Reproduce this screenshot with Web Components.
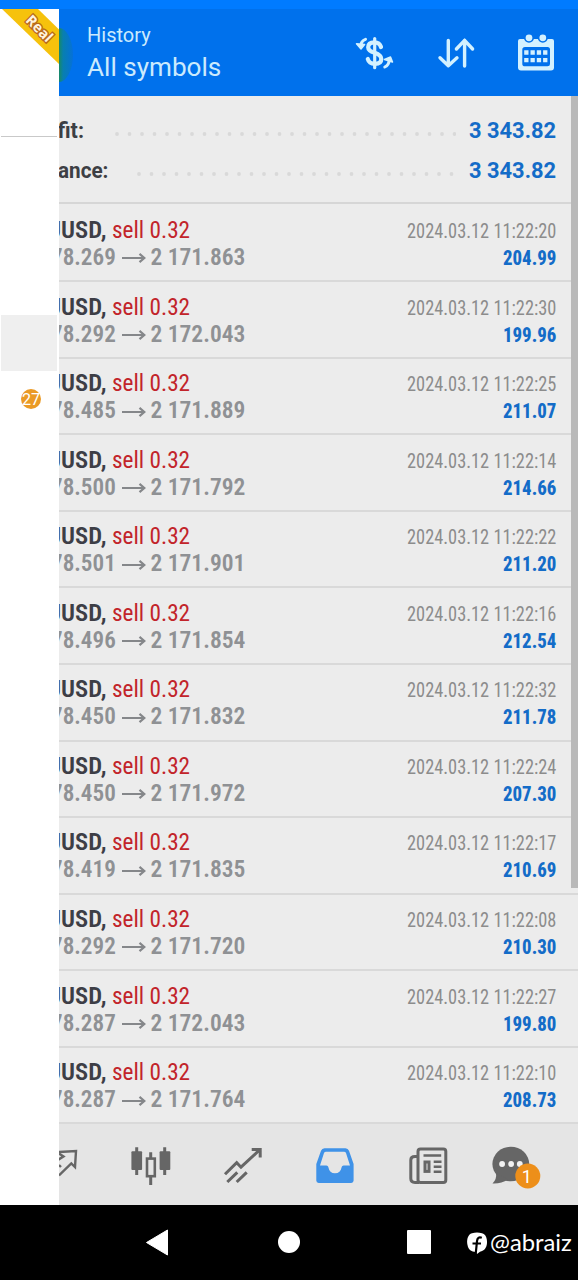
<!DOCTYPE html>
<html lang="en">
<head>
<meta charset="utf-8">
<title>History</title>
<style>
    html, body {
        margin: 0;
        background: #000;
        font-family: "Roboto Condensed", Roboto, "Liberation Sans", sans-serif;
    }
    body {
        width: 578px;
        height: 1280px;
        overflow: hidden;
    }
</style>
</head>
<body>
<history-app></history-app>
<script>
// Text squeezed or stretched to a fixed width
class FitText extends HTMLElement {
    constructor() {
        super();
        this.attachShadow({ mode: 'open' });
    }

    connectedCallback() {
        const width = Number(this.getAttribute('width'));
        this.shadowRoot.innerHTML = `
            <style>
                :host {
                    display: block;
                    flex: none;
                    width: ${width}px;
                    white-space: nowrap;
                }
                span {
                    display: inline-block;
                    transform-origin: 0 50%;
                }
            </style>
            <span><slot></slot></span>
        `;
        const span = this.shadowRoot.querySelector('span');
        span.style.transform = `scaleX(${width / span.offsetWidth})`;
    }
}

class SideDrawer extends HTMLElement {
    constructor() {
        super();
        this.attachShadow({ mode: 'open' });
        this.shadowRoot.innerHTML = `
            <style>
                :host {
                    display: flex;
                    flex-direction: column;
                    background: #fff;
                    overflow: hidden;
                }
                svg { display: block; flex: none; }
                .line { height: 1px; margin: 67px 2px 0 1px; background: #c9c9c9; flex: none; }
                .active { height: 56px; margin: 178px 2px 0 1px; background: #efefef; flex: none; }
                .badge {
                    width: 20px;
                    height: 20px;
                    margin: 18px 0 0 20.5px;
                    border-radius: 50%;
                    background: #eb9a25;
                    color: #fff;
                    font: 17px/20px Roboto, sans-serif;
                    display: flex;
                    justify-content: center;
                }
            </style>
            <svg width="59" height="60" viewBox="0 0 59 60">
                <path d="M2 0H38L59 20.5V55Z" fill="#f6c20c"/>
                <text x="39" y="24.5" transform="rotate(45 39 20)" text-anchor="middle" font-family="Open Sans, sans-serif"
                    font-size="14.5" font-weight="700" fill="#fff3dd" stroke="#b9681c" stroke-width="2.6" paint-order="stroke">Real</text>
            </svg>
            <div class="line"></div>
            <div class="active"></div>
            <div class="badge"><fit-text width="18">27</fit-text></div>
        `;
    }
}

class AppHeader extends HTMLElement {
    constructor() {
        super();
        this.attachShadow({ mode: 'open' });
        this.shadowRoot.innerHTML = `
            <style>
                :host {
                    display: flex;
                    align-items: center;
                    height: 87px;
                    box-sizing: border-box;
                    padding-right: 18px;
                    background: #0071ec;
                    color: #cbeafd;
                    font-family: Roboto, sans-serif;
                }
                .avatar {
                    width: 14px;
                    height: 54px;
                    margin: 4px 14px 0 0;
                    border-radius: 0 14px 14px 0 / 0 27px 27px 0;
                    background: linear-gradient(90deg, #178a66, #087fb0 30%, #0571d8);
                }
                .titles { flex: 1; padding-top: 6px; }
                .small { font-size: 20px; line-height: 26px; margin-top: -3px; }
                .big { font-size: 26.5px; line-height: 38px; }
                .icons { display: flex; gap: 32.5px; }
            </style>
            <div class="avatar"></div>
            <div class="titles">
                <fit-text class="small" width="64">History</fit-text>
                <fit-text class="big" width="134">All symbols</fit-text>
            </div>
            <div class="icons">
                <svg width="48" height="48" viewBox="0 0 48 48" fill="none" stroke="#d3f1ff" stroke-linecap="round" stroke-linejoin="round">
                    <path d="M30 18Q28.5 13.3 23.5 13.3Q17.2 13.3 17.2 18.2Q17.2 21.8 23.7 23.8Q30.3 26 30.3 30Q30.3 34.8 24 34.8Q18 34.8 16.8 30" stroke-width="4.2"/>
                    <path d="M23.7 9.5V38.7" stroke-width="3.2"/>
                    <path d="M14.5 10.3Q10 11.8 9.7 17" stroke-width="3"/>
                    <path d="M5.5 14.8L13.6 15.5L10 20Z" fill="#d3f1ff" stroke-width="1.5"/>
                    <path d="M33.8 38Q38 36 38.2 31" stroke-width="3"/>
                    <path d="M41.5 33L33.5 30.5L39.5 28Z" fill="#d3f1ff" stroke-width="1.5"/>
                </svg>
                <svg width="48" height="48" viewBox="0 0 48 48" fill="none" stroke="#d3f1ff" stroke-width="3.4" stroke-linecap="round" stroke-linejoin="round">
                    <path d="M16.3 11.5V36.8M8 28.8L16.3 36.8L25 28.8"/>
                    <path d="M32.6 37V11.3M24.4 20L32.6 11.3L40.6 20"/>
                </svg>
                <svg width="48" height="48" viewBox="0 0 48 48" fill="#d3f1ff">
                    <path fill-rule="evenodd" d="M8 10H40Q42 10 42 12V38.5Q42 41.5 39 41.5H9Q6 41.5 6 38.5V12Q6 10 8 10ZM13 18Q10.3 18 10.3 20.5V35Q10.3 37.3 13 37.3H35.5Q38 37.3 38 35V20.5Q38 18 35.5 18Z"/>
                    <g stroke="#0071ec" stroke-width="1.6">
                        <circle cx="17" cy="8.8" r="4.2"/>
                        <circle cx="30.8" cy="8.8" r="4.2"/>
                    </g>
                    <path d="M12.2 23.5H35.5M12.2 31.2H35.5" stroke="#d3f1ff" stroke-width="4.3" stroke-dasharray="4.3 2"/>
                </svg>
            </div>
        `;
    }
}

class SummaryRow extends HTMLElement {
    constructor() {
        super();
        this.attachShadow({ mode: 'open' });
    }

    connectedCallback() {
        const labelWidth = this.getAttribute('label-width');
        const dots = Number(this.getAttribute('dots'));
        const circles = Array.from({ length: dots }, (_, i) =>
            `<circle cx="${2 + i * 12.5}" cy="2" r="1.9"/>`).join('');

        this.shadowRoot.innerHTML = `
            <style>
                :host {
                    display: flex;
                    align-items: center;
                    height: 40px;
                    font: 700 21.5px/40px Roboto, sans-serif;
                    color: #3d3f44;
                }
                svg { margin: 7px 0 0 auto; fill: #d9d9d9; }
                .value { color: #146cc8; margin-left: ${this.getAttribute('gap')}px; }
            </style>
            <fit-text width="${labelWidth}">${this.getAttribute('label')}</fit-text>
            <svg width="${dots * 12.5 - 8.5}" height="4">${circles}</svg>
            <fit-text class="value" width="87.5">${this.getAttribute('value')}</fit-text>
        `;
    }
}

class DealRow extends HTMLElement {
    constructor() {
        super();
        this.attachShadow({ mode: 'open' });
    }

    connectedCallback() {
        this.shadowRoot.innerHTML = `
            <style>
                :host {
                    display: block;
                    box-sizing: border-box;
                    padding: 10.3px 22px 0 0;
                    border-bottom: 2px solid #d9d9d9;
                }
                div {
                    display: flex;
                    align-items: center;
                }
                .top { height: 28px; line-height: 28px; }
                .bottom { height: 27px; line-height: 27px; }
                .symbol { margin-left: -12px; font-size: 24px; font-weight: 600; color: #3d3e46; }
                .side { margin-left: 5px; font-size: 24px; font-weight: 450; color: #c2242a; }
                .date { margin: 2px 0 0 auto; font-size: 21px; color: #8c8c8c; }
                .open { margin-left: -8.5px; font-size: 23.5px; font-weight: 600; color: #8f9194; }
                svg { flex: none; margin: 2px 5px 0 6px; fill: none; stroke: #85878a; stroke-width: 2.2; }
                .close { font-size: 23.5px; font-weight: 600; color: #8f9194; }
                .profit { margin: 2px 0 0 auto; font-size: 20px; font-weight: 800; color: #146cc8; }
            </style>
            <div class="top">
                <fit-text class="symbol" width="59.5">UUSD,</fit-text>
                <fit-text class="side" width="78.5">sell 0.32</fit-text>
                <fit-text class="date" width="149.5">2024.03.12 11:22:${this.getAttribute('sec')}</fit-text>
            </div>
            <div class="bottom">
                <fit-text class="open" width="65">${this.getAttribute('open')}</fit-text>
                <svg width="24" height="12"><path d="M0 6H22M17.5 1.8L22.3 6L17.5 10.2"/></svg>
                <fit-text class="close" width="95">${this.getAttribute('close')}</fit-text>
                <fit-text class="profit" width="53.5">${this.getAttribute('profit')}</fit-text>
            </div>
        `;
    }
}

class TabBar extends HTMLElement {
    constructor() {
        super();
        this.attachShadow({ mode: 'open' });
        this.shadowRoot.innerHTML = `
            <style>
                :host {
                    display: grid;
                    grid-template-columns: repeat(6, 92.4px);
                    justify-items: center;
                    margin-left: -47px;
                    padding-top: 11.6px;
                    background: #e5e5e5;
                    color: #666;
                }
                svg { fill: none; stroke: currentColor; stroke-width: 3; }
            </style>
            <svg width="60" height="60" style="stroke-width: 2.4">
                <path d="M30 16L48 15L47 31L43.3 27.5L31 39.5"/>
                <path d="M29 24.5L35.5 20.5L31 17.5M31 29L33 31"/>
            </svg>
            <svg width="60" height="60">
                <path d="M15.7 11.3V39M43.7 11.3V39M29.7 16.3V22M29.7 41V49"/>
                <rect x="10.4" y="15.3" width="10.7" height="18.7" rx="1" fill="currentColor" stroke="none"/>
                <rect x="38.6" y="15.3" width="10.7" height="18.7" rx="1" fill="currentColor" stroke="none"/>
                <rect x="26" y="22.6" width="7.8" height="17.6" stroke-width="2.6"/>
            </svg>
            <svg width="60" height="60">
                <path d="M12 38.3L23.7 26.7L28 31.2L46.5 14M38.7 13.5H47.2V21.5M14.3 46L24.3 36.3M23.7 46L33.7 36.3"/>
            </svg>
            <svg width="60" height="60">
                <path fill="#3f92e8" stroke="none" fill-rule="evenodd" d="M19.5 12.3H40.5Q43 12.3 44 14.8L48.6 28V44.5Q48.6 46.9 46.2 46.9H13.7Q11.3 46.9 11.3 44.5V28L16 14.8Q17 12.3 19.5 12.3ZM21 15.8Q19.5 15.8 19 17L15 29.5H21.5Q23 29.5 23.3 31Q24.5 37.3 30 37.3Q35.5 37.3 36.7 31Q37 29.5 38.5 29.5H45L41 17Q40.5 15.8 39 15.8Z"/>
            </svg>
            <svg width="60" height="60">
                <rect x="20" y="13" width="27.8" height="33.4" rx="2.5"/>
                <path d="M19 20.5H17Q12.8 20.5 12.8 24V42.5Q12.8 46.4 17 46.4H21"/>
                <path d="M25.5 19.6H43.2M35.7 25.7H43.5M35.7 30.7H43.5M35.7 35.7H43.5" stroke-width="2.5"/>
                <rect x="27" y="26" width="4" height="9.4"/>
            </svg>
            <svg width="60" height="60">
                <g stroke="none" fill="currentColor">
                    <ellipse cx="20.8" cy="28" rx="18.4" ry="17.2"/>
                    <path d="M6 37Q7 43 2.5 47.5Q11 48 18 43.5Z"/>
                    <g fill="#f2f2f2">
                        <circle cx="12.1" cy="28" r="2.9"/>
                        <circle cx="21.1" cy="28" r="2.9"/>
                        <circle cx="29.8" cy="28" r="2.9"/>
                    </g>
                    <circle cx="37.8" cy="40" r="12.5" fill="#ed8f1a"/>
                    <text x="36.8" y="46.5" text-anchor="middle" font-family="Roboto, sans-serif" font-size="18" fill="#fff">1</text>
                </g>
            </svg>
        `;
    }
}

class SystemNav extends HTMLElement {
    constructor() {
        super();
        this.attachShadow({ mode: 'open' });
        this.shadowRoot.innerHTML = `
            <style>
                :host {
                    display: flex;
                    align-items: center;
                    height: 75.5px;
                    background: #000;
                    color: #fff;
                }
                svg { display: block; flex: none; fill: #fff; }
                .back { margin-left: 145px; }
                .home { width: 22px; height: 22px; margin-left: 109.7px; border-radius: 50%; background: #fff; }
                .recent { width: 23.6px; height: 23.6px; margin-left: 107.6px; border-radius: 1px; background: #fff; }
                .logo { margin: 3px 0 0 36.5px; }
                .user { margin-left: 2.5px; font: 23.5px/30px Lato, sans-serif; }
            </style>
            <svg class="back" width="23" height="27"><path d="M1.5 13.5L22.5 1V26Z" stroke="#fff"/></svg>
            <div class="home"></div>
            <div class="recent"></div>
            <svg class="logo" width="20" height="23" viewBox="0 0 20 23">
                <path d="M5 1.2Q10 0 15 1.2Q19 2.5 19.7 7Q20.5 11 19.3 14.5Q17.5 19 13 19.7L10 22L8.5 20Q2.5 19.5 1 15Q-.6 10.5 .6 6Q2 2 5 1.2Z"/>
                <path d="M14.8 5.8Q10.5 4.3 10 9.2L8.7 22M5.5 11.5H14" fill="none" stroke="#000" stroke-width="2.2"/>
            </svg>
            <fit-text class="user" width="82">@abraiz</fit-text>
        `;
    }
}

const deals = [
    ['269', '171.863', '20', '204.99'],
    ['292', '172.043', '30', '199.96'],
    ['485', '171.889', '25', '211.07'],
    ['500', '171.792', '14', '214.66'],
    ['501', '171.901', '22', '211.20'],
    ['496', '171.854', '16', '212.54'],
    ['450', '171.832', '32', '211.78'],
    ['450', '171.972', '24', '207.30'],
    ['419', '171.835', '17', '210.69'],
    ['292', '171.720', '08', '210.30'],
    ['287', '172.043', '27', '199.80'],
    ['287', '171.764', '10', '208.73']
];

class HistoryApp extends HTMLElement {
    constructor() {
        super();
        this.attachShadow({ mode: 'open' });
    }

    connectedCallback() {
        const rows = deals.map(([open, close, sec, profit]) =>
            `<deal-row open="78.${open}" close="2 ${close}" sec="${sec}" profit="${profit}"></deal-row>`).join('');

        this.shadowRoot.innerHTML = `
            <style>
                :host {
                    display: grid;
                    grid-template-rows: 9px 1195.5px 75.5px;
                    width: 578px;
                    height: 1280px;
                }
                .status { background: #007bff; }
                .screen {
                    display: grid;
                    grid-template-columns: 59px 519px;
                    min-height: 0;
                }
                .page {
                    display: grid;
                    grid-template-rows: 87px 109.7px 918.7px 1fr;
                    position: relative;
                    overflow: hidden;
                    background: #ececec;
                }
                .summary {
                    box-sizing: border-box;
                    height: 108.3px;
                    padding: 14.5px 22px 0 0;
                    border-bottom: 2px solid #d6d6d6;
                }
                .summary summary-row { margin-left: -1.5px; }
                .deals {
                    display: grid;
                    grid-template-rows: repeat(12, 1fr);
                }
                .scrollbar {
                    position: absolute;
                    top: 87px;
                    right: 0;
                    width: 7px;
                    height: 792px;
                    background: #b9b9b9;
                }
            </style>
            <div class="status"></div>
            <div class="screen">
                <side-drawer></side-drawer>
                <div class="page">
                    <app-header></app-header>
                    <div class="summary">
                        <summary-row label="fit:" label-width="26" value="3 343.82" dots="28" gap="12.5"></summary-row>
                        <summary-row label="ance:" label-width="50" value="3 343.82" dots="26" gap="15"></summary-row>
                    </div>
                    <div class="deals">${rows}</div>
                    <tab-bar></tab-bar>
                    <div class="scrollbar"></div>
                </div>
            </div>
            <system-nav></system-nav>
        `;
    }
}

// Registrar os componentes
customElements.define('fit-text', FitText);
customElements.define('side-drawer', SideDrawer);
customElements.define('app-header', AppHeader);
customElements.define('summary-row', SummaryRow);
customElements.define('deal-row', DealRow);
customElements.define('tab-bar', TabBar);
customElements.define('system-nav', SystemNav);
customElements.define('history-app', HistoryApp);
</script>
</body>
</html>
